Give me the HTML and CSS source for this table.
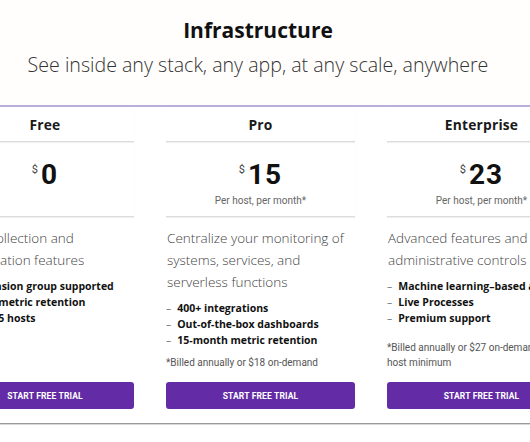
FILE: index.html
```html
<!DOCTYPE html>
<html lang="en">
<head>
<meta charset="utf-8">
<title>Infrastructure pricing</title>
<link rel="stylesheet" href="styles.css">
</head>
<body>
<header class="hero">
  <h1 class="hero-title">Infrastructure</h1>
  <p class="hero-sub">See inside any stack, any app, at any scale, anywhere</p>
</header>
<div class="rule-top"></div>
<section class="plans">
  <article class="plan plan-free">
    <h2 class="plan-name">Free</h2>
    <div class="plan-price">
      <div class="amount"><span class="cur">$</span><span class="num">0</span></div>
    </div>
    <p class="plan-desc">Core collection and visualization features</p>
    <ul class="plan-list">
      <li>Dimension group supported</li>
      <li>1-day metric retention</li>
      <li>Up to 5 hosts</li>
    </ul>
    <div class="plan-foot">
      <a class="btn" href="#">Start free trial</a>
    </div>
  </article>
  <article class="plan">
    <h2 class="plan-name">Pro</h2>
    <div class="plan-price">
      <div class="amount"><span class="cur">$</span><span class="num">15</span></div>
      <p class="per">Per host, per month*</p>
    </div>
    <p class="plan-desc">Centralize your monitoring of systems, services, and serverless functions</p>
    <ul class="plan-list">
      <li>400+ integrations</li>
      <li>Out-of-the-box dashboards</li>
      <li>15-month metric retention</li>
    </ul>
    <div class="plan-foot">
      <p class="note">*Billed annually or $18 on-demand</p>
      <a class="btn" href="#">Start free trial</a>
    </div>
  </article>
  <article class="plan">
    <h2 class="plan-name">Enterprise</h2>
    <div class="plan-price">
      <div class="amount"><span class="cur">$</span><span class="num">23</span></div>
      <p class="per">Per host, per month*</p>
    </div>
    <p class="plan-desc">Advanced features and administrative controls</p>
    <ul class="plan-list">
      <li>Machine learning–based alerts</li>
      <li>Live Processes</li>
      <li>Premium support</li>
    </ul>
    <div class="plan-foot">
      <p class="note">*Billed annually or $27 on-demand, 10 host minimum</p>
      <a class="btn" href="#">Start free trial</a>
    </div>
  </article>
</section>
<div class="rule-bottom"></div>
</body>
</html>
```

FILE: styles.css
```css
* { box-sizing: border-box; }
html, body { margin: 0; padding: 0; }
body {
  width: 530px;
  height: 442px;
  overflow: hidden;
  background: #ffffff;
  font-family: "Open Sans", "Liberation Sans", sans-serif;
  color: #222;
}
.hero {
  padding: 17px 14px 0 0;
  height: 105px;
  text-align: center;
  background: #fffefc;
}
.hero-title {
  margin: 0;
  font-family: "Open Sans", sans-serif;
  font-weight: 700;
  font-size: 21px;
  line-height: 26px;
  color: #111;
}
.hero-sub {
  margin: 9px 0 0;
  font-family: "Open Sans", sans-serif;
  font-weight: 300;
  font-size: 19.6px;
  line-height: 26px;
  color: #333;
}
.rule-top {
  height: 2px;
  background: #bcaedb;
}
.plans {
  display: flex;
  gap: 32px;
  margin-left: -44px;
  width: 700px;
  align-items: stretch;
}
.plan {
  flex: 0 0 189px;
  display: flex;
  flex-direction: column;
}
.plan-free {
  flex-basis: 178px;
}
.plan-name {
  margin: 0;
  height: 35px;
  display: flex;
  align-items: center;
  justify-content: center;
  font-family: "Open Sans", sans-serif;
  font-size: 13.8px;
  font-weight: 700;
  letter-spacing: 0.2px;
  color: #1a1a1a;
  border-bottom: 1px solid #dcdcdc;
  box-shadow: 0 1px 1px rgba(0,0,0,0.06);
}
.plan-price {
  height: 75px;
  border-bottom: 1px solid #dcdcdc;
  box-shadow: 0 1px 1px rgba(0,0,0,0.06);
  text-align: center;
  padding-top: 14px;
}
.amount {
  display: inline-flex;
  align-items: flex-start;
  gap: 3px;
}
.cur {
  font-family: Roboto, sans-serif;
  font-size: 11px;
  line-height: 12px;
  color: #444;
  margin-top: 2px;
}
.num {
  font-family: Roboto, sans-serif;
  font-weight: 700;
  font-size: 28px;
  line-height: 26px;
  letter-spacing: 1px;
  color: #111;
}
.per {
  margin: 7px 0 0;
  font-family: Roboto, sans-serif;
  font-size: 10px;
  line-height: 12px;
  color: #666;
}
.plan-desc {
  margin: 10px 0 0;
  padding-left: 1px;
  font-family: "Open Sans", sans-serif;
  font-weight: 300;
  font-size: 13.5px;
  line-height: 22px;
  color: #444;
}
.plan-list {
  list-style: none;
  margin: 7px 0 0;
  padding: 0;
}
.plan-list li {
  font-family: "Open Sans", sans-serif;
  font-weight: 700;
  font-size: 10.5px;
  line-height: 16px;
  color: #111;
  white-space: nowrap;
}
.plan-list li::before {
  content: "–";
  font-weight: 400;
  color: #777;
  margin-right: 6px;
}
.plan-foot {
  margin-top: auto;
  padding-top: 7px;
}
.note {
  margin: 0 0 12px;
  font-family: Roboto, sans-serif;
  font-size: 10px;
  line-height: 15px;
  color: #555;
}
.btn {
  display: flex;
  align-items: center;
  justify-content: center;
  height: 27px;
  border-radius: 3px;
  background: #632ca6;
  color: #fff;
  text-decoration: none;
  text-transform: uppercase;
  font-family: Roboto, sans-serif;
  font-weight: 700;
  font-size: 8.5px;
  letter-spacing: 0.15px;
}
.rule-bottom {
  margin-top: 14px;
  height: 2px;
  background: #9a9a9a;
  border-bottom: 1px solid #d8d8d8;
}
```
